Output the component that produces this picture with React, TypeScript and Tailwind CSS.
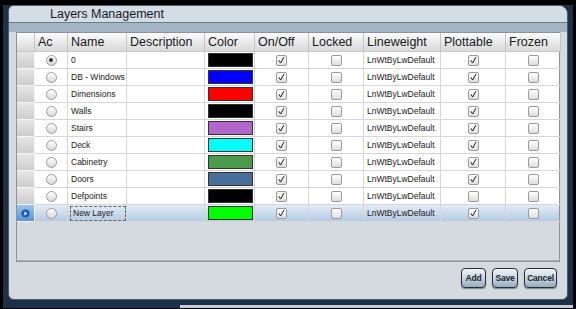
import type { ReactNode } from "react";

type Layer = {
  name: string;
  color: string;
  on: boolean;
  locked: boolean;
  plot: boolean;
  frozen: boolean;
  active?: boolean;
  selected?: boolean;
};

const layers: Layer[] = [
  { name: "0", color: "#000000", on: true, locked: false, plot: true, frozen: false, active: true },
  { name: "DB - Windows", color: "#0000ff", on: true, locked: false, plot: true, frozen: false },
  { name: "Dimensions", color: "#ff0000", on: true, locked: false, plot: true, frozen: false },
  { name: "Walls", color: "#000000", on: true, locked: false, plot: true, frozen: false },
  { name: "Stairs", color: "#b266cc", on: true, locked: false, plot: true, frozen: false },
  { name: "Deck", color: "#00ffff", on: true, locked: false, plot: true, frozen: false },
  { name: "Cabinetry", color: "#4c9a4c", on: true, locked: false, plot: true, frozen: false },
  { name: "Doors", color: "#4a6e9c", on: true, locked: false, plot: true, frozen: false },
  { name: "Defpoints", color: "#000000", on: true, locked: false, plot: false, frozen: false },
  { name: "New Layer", color: "#00ff00", on: true, locked: false, plot: true, frozen: false, selected: true },
];

const cols = "grid grid-cols-[18px_33px_59px_78px_50px_54px_55px_77px_65px_55px]";
const headers = ["", "Ac", "Name", "Description", "Color", "On/Off", "Locked", "Lineweight", "Plottable", "Frozen"];

function CheckBox({ checked }: { checked: boolean }) {
  return (
    <span className="flex h-[11px] w-[11px] items-center justify-center rounded-[2px] border border-[#9a9a9a] bg-gradient-to-b from-white to-[#dedede]">
      {checked && (
        <svg viewBox="0 0 11 11" className="h-[11px] w-[11px]" fill="none" stroke="#1a1a1a" strokeWidth="1.2">
          <path d="M2.3 5.3 L4.4 8.6 L8.6 1.2" />
        </svg>
      )}
    </span>
  );
}

function Radio({ checked }: { checked?: boolean }) {
  return (
    <span className="flex h-[11px] w-[11px] items-center justify-center rounded-full border border-[#9c9c9c] bg-gradient-to-b from-white to-[#d8d8d8]">
      {checked && <span className="h-[4px] w-[4px] rounded-full bg-[#333]" />}
    </span>
  );
}

function Cell({ children, center, className = "" }: { children?: ReactNode; center?: boolean; className?: string }) {
  return (
    <div
      className={`flex h-[17px] items-center overflow-hidden whitespace-nowrap border-r border-b border-[#d6d6d6] text-[8.5px] text-[#1a1a1a] ${
        center ? "justify-center" : "pl-[3px]"
      } ${className}`}
    >
      {children}
    </div>
  );
}

function Row({ layer }: { layer: Layer }) {
  const bg = layer.selected ? "bg-gradient-to-b from-[#e3ecf6] to-[#b3c9e2]" : "bg-white";
  return (
    <div className={`${cols} ${bg}`}>
      <div
        className={`flex h-[17px] items-center justify-center border-r border-b border-[#f4f4f4] ${
          layer.selected
            ? "bg-gradient-to-b from-[#9cc3ee] to-[#5b93d6]"
            : "bg-gradient-to-b from-[#e6e6e6] to-[#cdcdcd]"
        }`}
      >
        {layer.selected && (
          <svg viewBox="0 0 10 10" className="h-[9px] w-[9px]">
            <circle cx="5" cy="5" r="4.5" fill="#1d5fb4" />
            <path d="M3.8 2.8 L7 5 L3.8 7.2 Z" fill="#fff" />
          </svg>
        )}
      </div>
      <Cell center>
        <Radio checked={layer.active} />
      </Cell>
      <Cell>
        {layer.selected ? (
          <span className="-ml-[1px] flex h-[15px] w-[56px] items-center border border-dashed border-[#666] pl-[2px]">
            {layer.name}
          </span>
        ) : (
          layer.name
        )}
      </Cell>
      <Cell />
      <Cell className="px-[1px] py-[1px] pl-[1px]">
        <span className="h-full w-full border border-[#333]" style={{ backgroundColor: layer.color }} />
      </Cell>
      <Cell center>
        <CheckBox checked={layer.on} />
      </Cell>
      <Cell center>
        <CheckBox checked={layer.locked} />
      </Cell>
      <Cell>LnWtByLwDefault</Cell>
      <Cell center>
        <CheckBox checked={layer.plot} />
      </Cell>
      <Cell center>
        <CheckBox checked={layer.frozen} />
      </Cell>
    </div>
  );
}

function Btn({ label }: { label: string }) {
  return (
    <button className="flex h-[20px] w-full items-center justify-center rounded-[4px] border border-[#2a2f36] bg-gradient-to-b from-[#eef3f7] via-[#c9d6e0] to-[#97acbc] text-[8.5px] font-bold tracking-[-0.2px] text-[#1a2430] shadow-[0_1px_1px_rgba(0,0,0,0.4)]">
      {label}
    </button>
  );
}

export default function App() {
  return (
    <div className="h-[309px] w-[576px] bg-black p-[3px] font-['Liberation_Sans',Arial,sans-serif]">
      <div className="relative h-[303px] w-[570px] bg-[#1c3049]">
        <div className="absolute left-[55px] top-0 h-[2px] w-[383px] bg-white" />
        <div className="absolute bottom-0 left-[177px] h-[3px] w-[393px] bg-[#c8ccd2]" />
        <div className="relative ml-[5px] mt-[2px] flex h-[295px] w-[560px] flex-col overflow-hidden rounded-[6px] rounded-tr-[9px] border border-[#4e5964] bg-[#d5d9e0]">
          <div className="flex h-[16px] items-center bg-[#d2dde6] pl-[41px] text-[12.5px] leading-none text-[#1a1a1a]">
            Layers Management
          </div>
          <div className="h-[1px] bg-[#6f7c87]" />
          <div className="h-[9px] bg-[#a2b6c5]" />
          <div className="flex flex-1 flex-col px-[7px]">
            <div className="h-[230px] border border-[#8d9299] bg-[#d5d9e0] shadow-[inset_0_-1px_0_#aeb2b8]">
              <div className={`${cols} h-[19px]`}>
                {headers.map((h, i) => (
                  <div
                    key={i}
                    className="flex items-center overflow-hidden whitespace-nowrap border-r border-b border-r-[#c4c4c4] border-b-[#c8c8c8] bg-gradient-to-b from-[#fbfbfb] to-[#d9d9d9] pl-[3px] text-[12.5px] text-[#1a1a1a]"
                  >
                    {h}
                  </div>
                ))}
              </div>
              {layers.map((l) => (
                <Row key={l.name} layer={l} />
              ))}
            </div>
            <div className="mt-[6px] flex justify-end gap-[6px] pr-[3px]">
              <div className="w-[25px]">
                <Btn label="Add" />
              </div>
              <div className="w-[26px]">
                <Btn label="Save" />
              </div>
              <div className="w-[33px]">
                <Btn label="Cancel" />
              </div>
            </div>
          </div>
        </div>
      </div>
    </div>
  );
}
